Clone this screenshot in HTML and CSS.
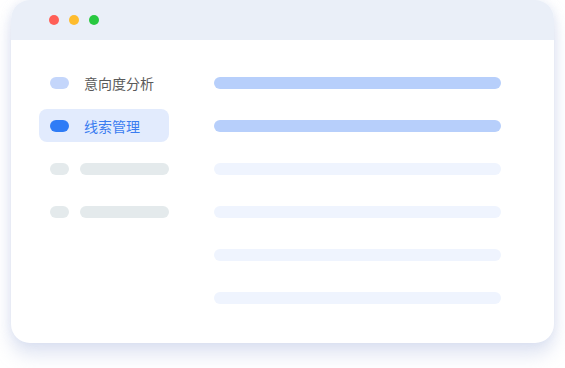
FILE: index.html
```html
<!DOCTYPE html>
<html>
    <head>
        <title>线索管理</title>
        <link rel="stylesheet" href="styles.css">
    </head>
    <body>
        <div class="window">
            <div class="titlebar">
                <span class="dot red"></span>
                <span class="dot yellow"></span>
                <span class="dot green"></span>
            </div>
            <div class="content">
                <ul class="menu">
                    <li class="menu-item">
                        <span class="pill"></span>
                        <span class="label">意向度分析</span>
                    </li>
                    <li class="menu-item active">
                        <span class="pill"></span>
                        <span class="label">线索管理</span>
                    </li>
                    <li class="menu-item">
                        <span class="pill grey"></span>
                        <span class="line"></span>
                    </li>
                    <li class="menu-item">
                        <span class="pill grey"></span>
                        <span class="line"></span>
                    </li>
                </ul>
                <div class="bars">
                    <div class="bar strong"></div>
                    <div class="bar strong"></div>
                    <div class="bar"></div>
                    <div class="bar"></div>
                    <div class="bar"></div>
                    <div class="bar"></div>
                </div>
            </div>
        </div>
    </body>
</html>
```

FILE: styles.css
```css
body {
  margin: 0;
  padding-bottom: 25px;
  background: #fff;
  font-family: "Noto Sans CJK SC", "Noto Sans", sans-serif;
}

.window {
  margin-left: 11px;
  width: 543px;
  height: 343px;
  border-radius: 19px;
  background: #fff;
  overflow: hidden;
  box-shadow: 0 12px 18px rgba(178, 190, 226, 0.4), 0 0 10px rgba(200, 208, 236, 0.35);
}

.titlebar {
  height: 40px;
  background: #eaeff8;
  display: flex;
  align-items: center;
  padding-left: 38px;
  gap: 10px;
}

.dot {
  width: 10px;
  height: 10px;
  border-radius: 50%;
}

.red { background: #ff5f57; }
.yellow { background: #febc2e; }
.green { background: #28c840; }

.content {
  display: flex;
  padding: 26px 0 0 28px;
  gap: 45px;
}

.menu {
  list-style: none;
  margin: 0;
  padding: 0;
  width: 130px;
  display: flex;
  flex-direction: column;
  gap: 10px;
}

.menu-item {
  height: 33px;
  border-radius: 8px;
  display: flex;
  align-items: center;
  padding-left: 11px;
}

.menu-item.active {
  background: #e2ebfd;
}

.pill {
  width: 19px;
  height: 12px;
  border-radius: 6px;
  background: #c4d6fb;
  flex: none;
}

.active .pill {
  background: #2f7cf6;
}

.pill.grey {
  background: #e4eaec;
}

.label {
  margin-left: 15px;
  font-size: 14px;
  color: #5a5a5a;
}

.active .label {
  color: #3a7cf0;
}

.line {
  margin-left: 11px;
  width: 89px;
  height: 12px;
  border-radius: 6px;
  background: #e4eaec;
}

.bars {
  display: flex;
  flex-direction: column;
  gap: 31px;
  padding-top: 11px;
}

.bar {
  width: 287px;
  height: 12px;
  border-radius: 6px;
  background: #eff4fe;
}

.bar.strong {
  background: #b7cffb;
}
```
